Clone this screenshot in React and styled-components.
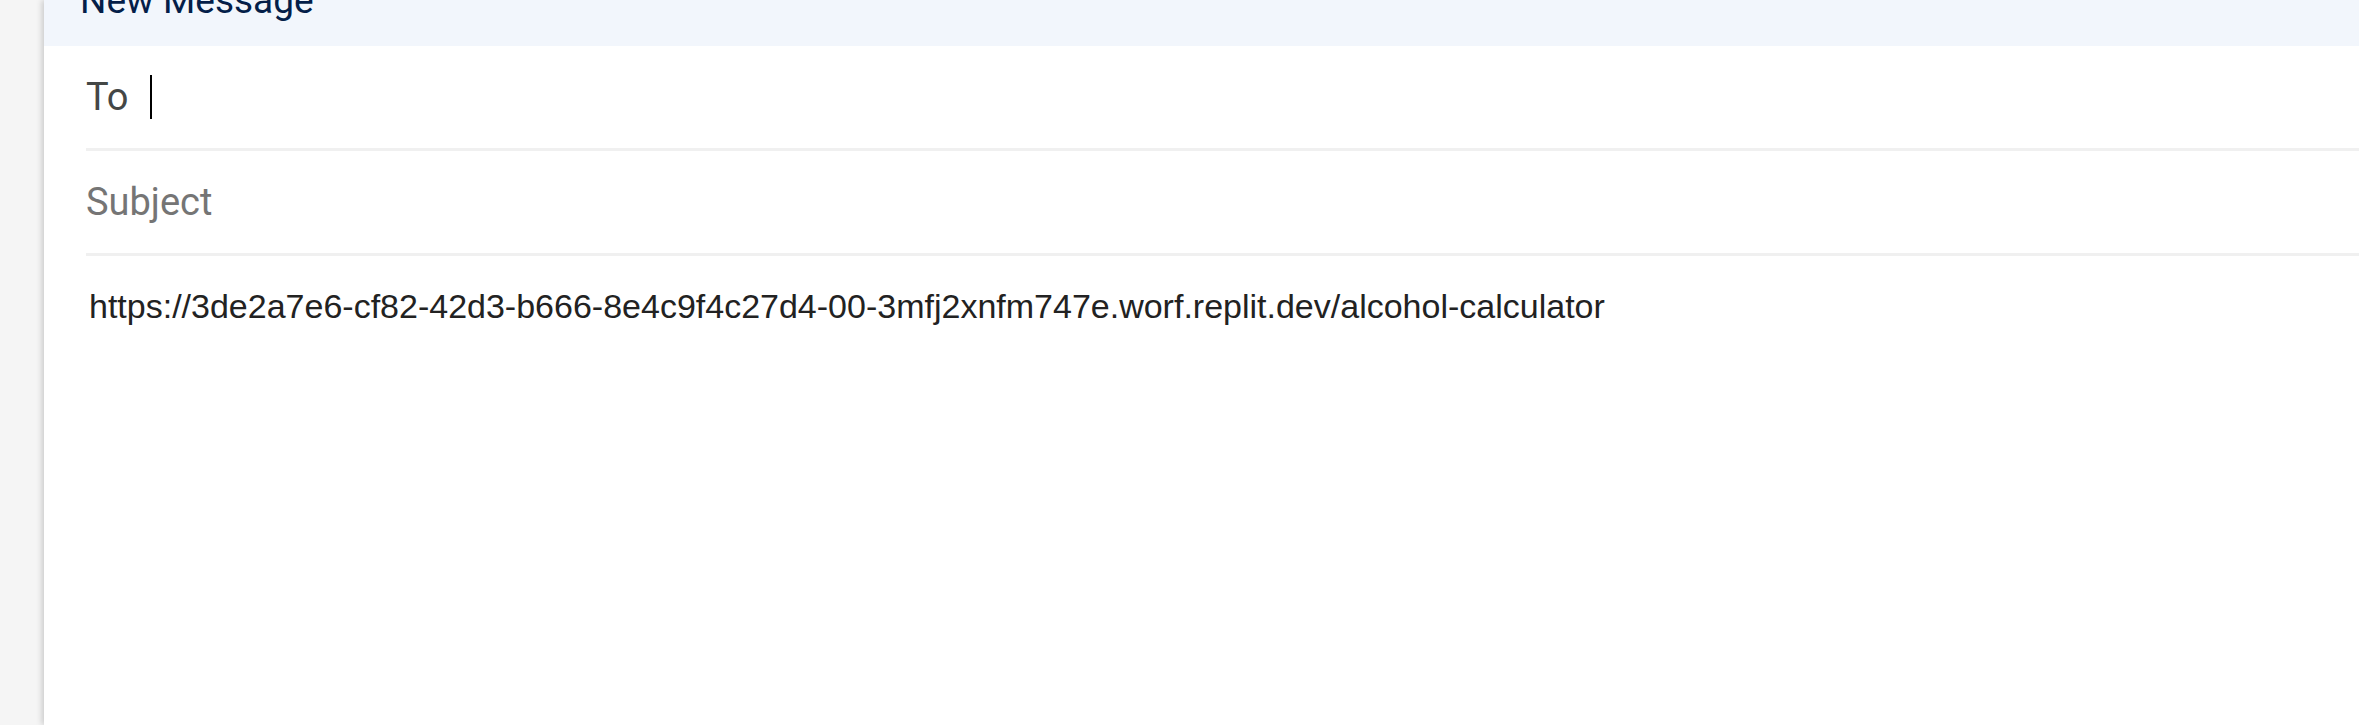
import React from 'react';
import styled, { createGlobalStyle } from 'styled-components';

const GlobalStyle = createGlobalStyle`
  html, body {
    margin: 0;
    padding: 0;
    height: 100%;
    overflow: hidden;
    background: #f5f5f5;
  }
  #root {
    height: 100%;
  }
`;

const Page = styled.div`
  display: flex;
  height: 100vh;
  width: 100%;
  padding-left: 44px;
  box-sizing: border-box;
`;

const Compose = styled.div`
  flex: 1;
  display: flex;
  flex-direction: column;
  background: #ffffff;
  box-shadow: -2px 0 6px rgba(0, 0, 0, 0.18);
`;

const Header = styled.div`
  height: 46px;
  flex-shrink: 0;
  overflow: hidden;
  background: #f2f6fc;
  padding-left: 36px;
`;

const Title = styled.div`
  margin-top: -18px;
  font-family: Roboto, "Noto Sans", sans-serif;
  font-size: 37px;
  line-height: 37px;
  font-weight: 400;
  color: #041e49;
`;

const Field = styled.div`
  display: flex;
  align-items: center;
  height: 102px;
  margin-left: 42px;
  border-bottom: 3px solid #f0f0f0;
  font-family: Roboto, "Noto Sans", sans-serif;
  font-size: 38px;
  color: ${p => (p.$placeholder ? '#757575' : '#444746')};
`;

const Caret = styled.span`
  display: block;
  width: 2px;
  height: 44px;
  margin-left: 21px;
  background: #000000;
`;

const Body = styled.div`
  padding: 31px 0 0 45px;
  font-family: "Liberation Sans", Arial, sans-serif;
  font-size: 34px;
  color: #222222;
`;

export default function App() {
  return (
    <>
      <GlobalStyle />
      <Page>
        <Compose>
          <Header>
            <Title>New Message</Title>
          </Header>
          <Field>
            To
            <Caret />
          </Field>
          <Field $placeholder>Subject</Field>
          <Body>
            https://3de2a7e6-cf82-42d3-b666-8e4c9f4c27d4-00-3mfj2xnfm747e.worf.replit.dev/alcohol-calculator
          </Body>
        </Compose>
      </Page>
    </>
  );
}
